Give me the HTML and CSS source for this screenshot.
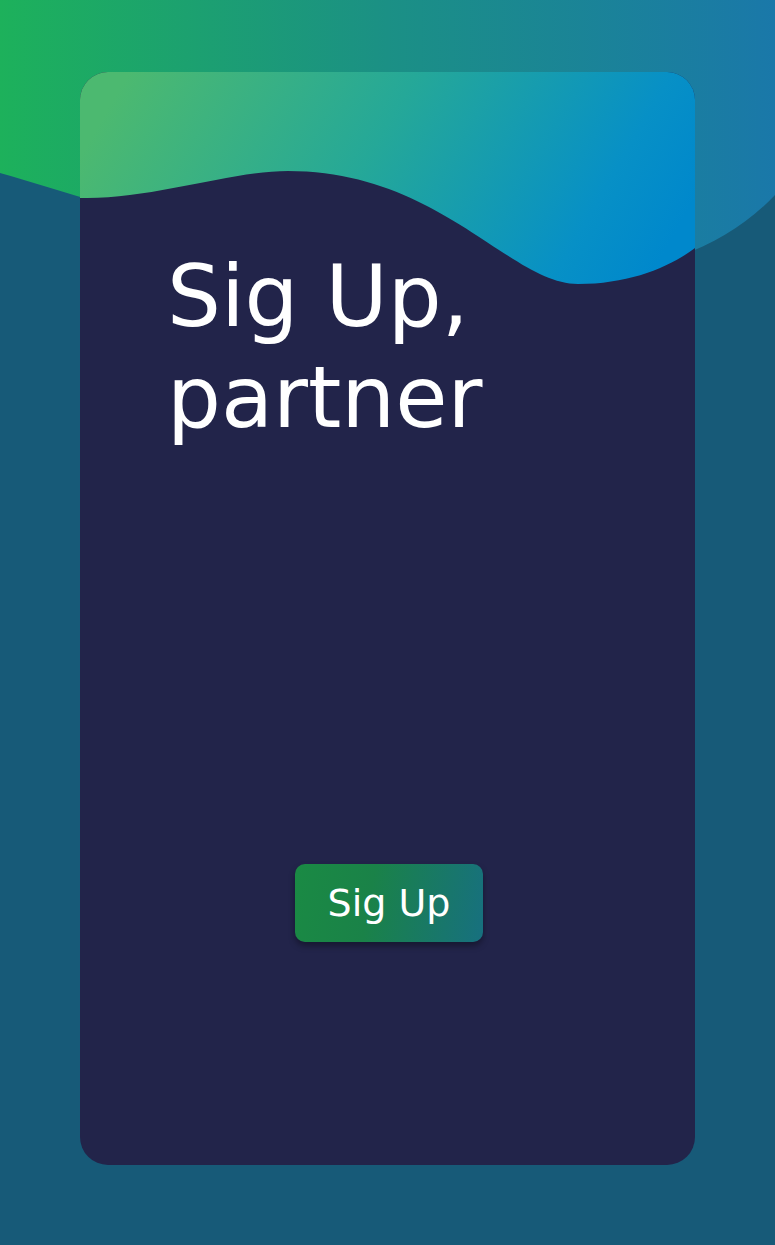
FILE: index.html
```html
<!DOCTYPE html>
<html lang="en">
<head>
<meta charset="utf-8">
<title>Sig Up</title>
<link rel="stylesheet" href="styles.css">
</head>
<body>
<svg class="bg-wave" width="775" height="260" viewBox="0 0 775 260" aria-hidden="true">
  <defs>
    <linearGradient id="bgGrad" x1="0" y1="0" x2="1" y2="0">
      <stop offset="0" stop-color="#1db15b"/>
      <stop offset="0.5" stop-color="#1b9085"/>
      <stop offset="1" stop-color="#1a78a9"/>
    </linearGradient>
  </defs>
  <path d="M0,173 C150,215 600,380 775,195 V0 H0 Z" fill="url(#bgGrad)"/>
</svg>
<main class="card">
  <svg class="card-wave" width="615" height="220" viewBox="0 0 615 220" aria-hidden="true">
    <defs>
      <linearGradient id="cardGrad" x1="0" y1="0.4" x2="1" y2="0.6">
        <stop offset="0" stop-color="#4cb970"/>
        <stop offset="0.45" stop-color="#25a898"/>
        <stop offset="0.85" stop-color="#0790c6"/>
        <stop offset="1" stop-color="#0088cc"/>
      </linearGradient>
    </defs>
    <path d="M0,126 C70,128 150,99 208,99 C360,99 430,212 498,212 C550,212 590,195 615,176 V0 H0 Z" fill="url(#cardGrad)"/>
  </svg>
  <h1 class="title">Sig Up,<br>partner</h1>
  <button class="signup-btn" type="button">Sig Up</button>
</main>
</body>
</html>
```
FILE: styles.css
```css
html, body {
  margin: 0;
  padding: 0;
}
body {
  background: #175a78;
  width: 775px;
  height: 1245px;
  position: relative;
  overflow: hidden;
  font-family: "DejaVu Sans", "Liberation Sans", sans-serif;
}
.bg-wave {
  position: absolute;
  left: 0;
  top: 0;
  display: block;
}
.card {
  position: relative;
  margin: 72px 0 0 80px;
  width: 615px;
  height: 1093px;
  box-sizing: border-box;
  background: #22244a;
  border-radius: 28px;
  overflow: hidden;
  display: flex;
  flex-direction: column;
  padding: 174px 0 0 87px;
}
.card-wave {
  position: absolute;
  left: 0;
  top: 0;
  display: block;
}
.title {
  position: relative;
  margin: 0;
  color: #ffffff;
  font-weight: normal;
  font-size: 85px;
  line-height: 101px;
}
.signup-btn {
  align-self: flex-start;
  margin: 416px 0 0 128px;
  width: 188px;
  height: 78px;
  border: none;
  border-radius: 10px;
  background: linear-gradient(100deg, #1a8a44 0%, #1a8248 40%, #17707f 100%);
  color: #ffffff;
  font-family: "DejaVu Sans", "Liberation Sans", sans-serif;
  font-size: 38px;
  padding: 0;
  box-shadow: 0 4px 6px rgba(0, 0, 0, 0.35);
  cursor: pointer;
}
```
